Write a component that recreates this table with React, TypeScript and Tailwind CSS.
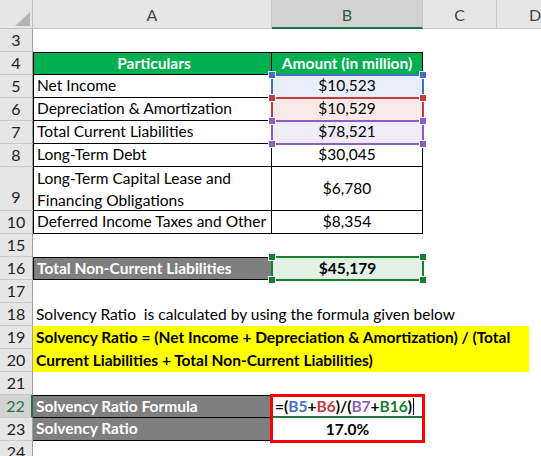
import React from "react";

const font = { fontFamily: "Lato, 'Liberation Sans', sans-serif" };

function RowHead({ n, active = false, tall = false }: { n: number; active?: boolean; tall?: boolean }) {
  return (
    <div
      className={
        "flex w-[33px] shrink-0 justify-center border-b border-b-[#c8c8c8] text-[16px] " +
        (tall ? "items-end pb-[1px] " : "items-center ") +
        (active
          ? "border-r-2 border-r-[#217346] bg-[#d2d2d2] text-[#217346]"
          : "border-r border-r-[#9f9f9f] bg-[#e6e6e6] text-[#222]")
      }
    >
      {n}
    </div>
  );
}

function Row({ n, children, active, tall }: { n: number; children?: React.ReactNode; active?: boolean; tall?: boolean }) {
  return (
    <div className={"flex " + (tall ? "h-[44px]" : "h-[23px]")}>
      <RowHead n={n} active={active} tall={tall} />
      {children}
    </div>
  );
}

function Handle({ x, y, color }: { x: number; y: number; color: string }) {
  return (
    <div
      className="absolute h-[6px] w-[6px] outline outline-1 outline-white"
      style={{ left: x - 3, top: y - 3, backgroundColor: color }}
    />
  );
}

function Box({ x, y, w, h, color }: { x: number; y: number; w: number; h: number; color: string }) {
  return (
    <div
      className="absolute border-2"
      style={{ left: x, top: y, width: w, height: h, borderColor: color }}
    />
  );
}

const A = "w-[239px] shrink-0 flex items-center whitespace-nowrap pl-[3px] text-[15.5px] text-black";
const B = "w-[151px] shrink-0 flex items-center justify-center whitespace-nowrap text-[15.5px] text-black";

export default function App() {
  const blue = "#3f6fc4";
  const red = "#c23b3d";
  const purple = "#8a5fbf";
  const green = "#16802f";
  return (
    <div className="relative h-[456px] w-[541px] overflow-hidden bg-white" style={font}>
      {/* column headers */}
      <div className="flex h-[29px] bg-[#e6e6e6] text-[16px] text-[#444]">
        <div className="relative w-[33px] shrink-0 border-b border-r border-[#c0c0c0]">
          <div
            className="absolute h-[14px] w-[15px] bg-[#b4b4b4]"
            style={{ left: 15, top: 12, clipPath: "polygon(100% 0, 100% 100%, 0 100%)" }}
          />
        </div>
        <div className="flex w-[239px] shrink-0 items-center justify-center border-b border-r border-[#c6c6c6] pt-[2px]">A</div>
        <div className="flex w-[151px] shrink-0 items-center justify-center border-b-2 border-r border-b-[#217346] border-r-[#c6c6c6] bg-[#d2d2d2] pt-[2px] text-[#2c5e3c]">B</div>
        <div className="flex w-[74px] shrink-0 items-center justify-center border-b border-r border-[#c6c6c6] pt-[2px]">C</div>
        <div className="flex flex-1 items-center justify-start border-b border-[#c6c6c6] pl-[32px] pt-[2px]">D</div>
      </div>

      <Row n={3} />
      <Row n={4}>
        <div className={A + " justify-center border border-black bg-[#00b050] font-bold text-white"}>Particulars</div>
        <div className={B + " border-b border-r border-t border-black bg-[#00b050] font-bold text-white"}>Amount (in million)</div>
      </Row>
      <Row n={5}>
        <div className={A + " border-b border-l border-r border-black"}>Net Income</div>
        <div className={B + " border-b border-r border-black bg-[#e8eef9]"}>$10,523</div>
      </Row>
      <Row n={6}>
        <div className={A + " border-b border-l border-r border-black"}>Depreciation &amp; Amortization</div>
        <div className={B + " border-b border-r border-black bg-[#f8e9e9]"}>$10,529</div>
      </Row>
      <Row n={7}>
        <div className={A + " border-b border-l border-r border-black"}>Total Current Liabilities</div>
        <div className={B + " border-b border-r border-black bg-[#efebf7]"}>$78,521</div>
      </Row>
      <Row n={8}>
        <div className={A + " border-b border-l border-r border-black"}>Long-Term Debt</div>
        <div className={B + " border-b border-r border-black"}>$30,045</div>
      </Row>
      <Row n={9} tall>
        <div className="flex w-[239px] shrink-0 flex-col justify-center whitespace-nowrap border-b border-l border-r border-black pl-[3px] text-[15.5px] leading-[22px] text-black">
          <span>Long-Term Capital Lease and</span>
          <span>Financing Obligations</span>
        </div>
        <div className={B + " border-b border-r border-black"}>$6,780</div>
      </Row>
      <Row n={10}>
        <div className={A + " border-b border-l border-r border-black"}>Deferred Income Taxes and Other</div>
        <div className={B + " border-b border-r border-black"}>$8,354</div>
      </Row>
      <Row n={15} />
      <Row n={16}>
        <div className={A + " border border-black bg-[#7f7f7f] font-bold text-white"}>Total Non-Current Liabilities</div>
        <div className={B + " bg-[#e3f0e5] font-bold"}>$45,179</div>
      </Row>
      <Row n={17} />
      <Row n={18}>
        <div className={A + " overflow-visible"}>Solvency Ratio&nbsp; is calculated by using the formula given below</div>
      </Row>
      <div className="flex h-[46px]">
        <div className="flex w-[33px] shrink-0 flex-col">
          <RowHeadInline n={19} />
          <RowHeadInline n={20} />
        </div>
        <div className="flex w-[496px] shrink-0 flex-col justify-center bg-[#ffff00] pl-[3px] text-[15.5px] font-bold leading-[23px] text-black">
          <span className="whitespace-nowrap">Solvency Ratio = (Net Income + Depreciation &amp; Amortization) / (Total</span>
          <span className="whitespace-nowrap">Current Liabilities + Total Non-Current Liabilities)</span>
        </div>
      </div>
      <Row n={21} />
      <Row n={22} active>
        <div className={A + " border-b border-t border-black bg-[#7f7f7f] font-bold text-white"}>Solvency Ratio Formula</div>
        <div className={B + " justify-start pl-[3px] font-bold"}>
          <span>=(</span>
          <span style={{ color: blue }}>B5</span>
          <span>+</span>
          <span style={{ color: red }}>B6</span>
          <span>)/(</span>
          <span style={{ color: purple }}>B7</span>
          <span>+</span>
          <span style={{ color: green }}>B16</span>
          <span>)</span>
          <span className="ml-[1px] inline-block h-[17px] w-[1px] bg-black" />
        </div>
      </Row>
      <Row n={23}>
        <div className={A + " border-b border-black bg-[#7f7f7f] font-bold text-white"}>Solvency Ratio</div>
        <div className={B + " font-bold"}>17.0%</div>
      </Row>
      <Row n={24} />

      {/* selection overlays */}
      <Box x={271} y={74} w={153} h={25} color={blue} />
      <Box x={271} y={97} w={153} h={25} color={red} />
      <Box x={271} y={120} w={153} h={25} color={purple} />
      <Handle x={272} y={75} color={blue} />
      <Handle x={423} y={75} color={blue} />
      <Handle x={272} y={98} color={red} />
      <Handle x={423} y={98} color={red} />
      <Handle x={272} y={121} color={purple} />
      <Handle x={423} y={121} color={purple} />
      <Handle x={272} y={144} color={purple} />
      <Handle x={423} y={144} color={purple} />

      <Box x={271} y={256} w={153} h={25} color={green} />
      <Handle x={272} y={257} color={green} />
      <Handle x={423} y={257} color={green} />
      <Handle x={272} y={280} color={green} />
      <Handle x={423} y={280} color={green} />

      <div className="absolute left-[272px] top-[416px] h-[2px] w-[150px] bg-[#217346]" />
      <div className="absolute left-[270px] top-[394px] h-[49px] w-[155px] border-[3px] border-[#ff0000]" />
    </div>
  );
}

function RowHeadInline({ n }: { n: number }) {
  return (
    <div className="flex h-[23px] items-center justify-center border-b border-r border-b-[#c8c8c8] border-r-[#9f9f9f] bg-[#e6e6e6] text-[16px] text-[#222]">
      {n}
    </div>
  );
}
